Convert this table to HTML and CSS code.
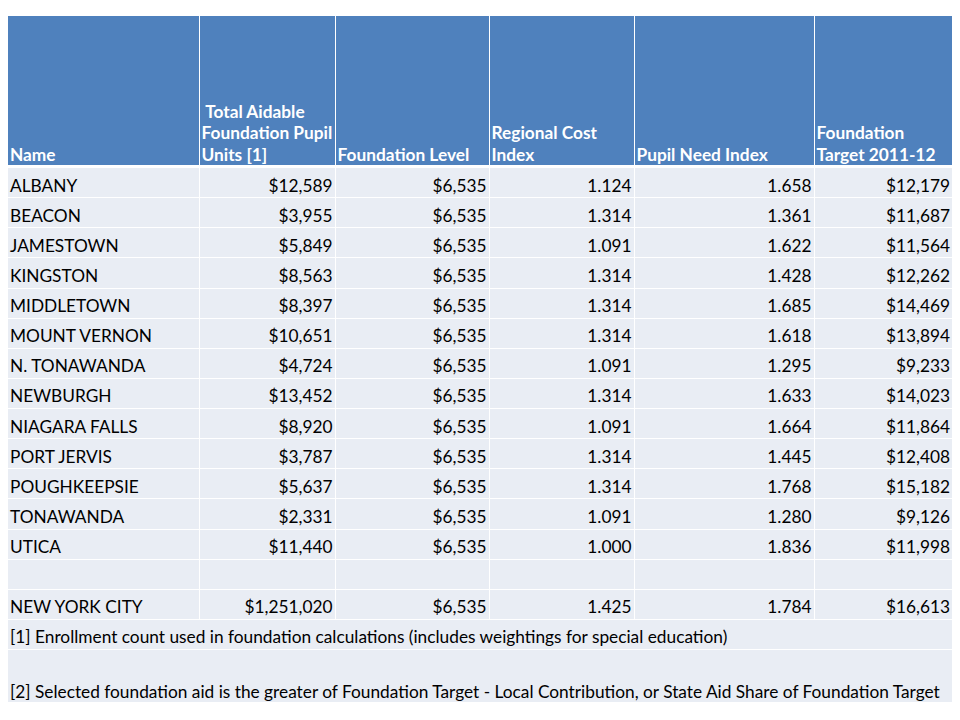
FILE: index.html
```html
<!DOCTYPE html>
<html>
<head>
<meta charset="utf-8">
<link rel="stylesheet" href="styles.css">
</head>
<body>
<table class="aid-table">
  <colgroup>
    <col class="c1"><col class="c2"><col class="c3"><col class="c4"><col class="c5"><col class="c6">
  </colgroup>
  <thead>
    <tr>
      <th>Name</th>
      <th>&nbsp;Total Aidable Foundation Pupil Units [1]</th>
      <th>Foundation Level</th>
      <th>Regional Cost Index</th>
      <th>Pupil Need Index</th>
      <th>Foundation Target 2011-12</th>
    </tr>
  </thead>
  <tbody>
    <tr><td>ALBANY</td><td class="num">$12,589</td><td class="num">$6,535</td><td class="num">1.124</td><td class="num">1.658</td><td class="num">$12,179</td></tr>
    <tr><td>BEACON</td><td class="num">$3,955</td><td class="num">$6,535</td><td class="num">1.314</td><td class="num">1.361</td><td class="num">$11,687</td></tr>
    <tr><td>JAMESTOWN</td><td class="num">$5,849</td><td class="num">$6,535</td><td class="num">1.091</td><td class="num">1.622</td><td class="num">$11,564</td></tr>
    <tr><td>KINGSTON</td><td class="num">$8,563</td><td class="num">$6,535</td><td class="num">1.314</td><td class="num">1.428</td><td class="num">$12,262</td></tr>
    <tr><td>MIDDLETOWN</td><td class="num">$8,397</td><td class="num">$6,535</td><td class="num">1.314</td><td class="num">1.685</td><td class="num">$14,469</td></tr>
    <tr><td>MOUNT VERNON</td><td class="num">$10,651</td><td class="num">$6,535</td><td class="num">1.314</td><td class="num">1.618</td><td class="num">$13,894</td></tr>
    <tr><td>N. TONAWANDA</td><td class="num">$4,724</td><td class="num">$6,535</td><td class="num">1.091</td><td class="num">1.295</td><td class="num">$9,233</td></tr>
    <tr><td>NEWBURGH</td><td class="num">$13,452</td><td class="num">$6,535</td><td class="num">1.314</td><td class="num">1.633</td><td class="num">$14,023</td></tr>
    <tr><td>NIAGARA FALLS</td><td class="num">$8,920</td><td class="num">$6,535</td><td class="num">1.091</td><td class="num">1.664</td><td class="num">$11,864</td></tr>
    <tr><td>PORT JERVIS</td><td class="num">$3,787</td><td class="num">$6,535</td><td class="num">1.314</td><td class="num">1.445</td><td class="num">$12,408</td></tr>
    <tr><td>POUGHKEEPSIE</td><td class="num">$5,637</td><td class="num">$6,535</td><td class="num">1.314</td><td class="num">1.768</td><td class="num">$15,182</td></tr>
    <tr><td>TONAWANDA</td><td class="num">$2,331</td><td class="num">$6,535</td><td class="num">1.091</td><td class="num">1.280</td><td class="num">$9,126</td></tr>
    <tr><td>UTICA</td><td class="num">$11,440</td><td class="num">$6,535</td><td class="num">1.000</td><td class="num">1.836</td><td class="num">$11,998</td></tr>
    <tr><td></td><td></td><td></td><td></td><td></td><td></td></tr>
    <tr><td>NEW YORK CITY</td><td class="num">$1,251,020</td><td class="num">$6,535</td><td class="num">1.425</td><td class="num">1.784</td><td class="num">$16,613</td></tr>
    <tr><td colspan="6" class="note">[1] Enrollment count used in foundation calculations (includes weightings for special education)</td></tr>
    <tr><td colspan="6" class="note note-tall">[2] Selected foundation aid is the greater of Foundation Target - Local Contribution, or State Aid Share of Foundation Target</td></tr>
  </tbody>
</table>
</body>
</html>
```
FILE: styles.css
```css
html, body {
  margin: 0;
  padding: 0;
  background: #ffffff;
}
body {
  padding: 16px 8px 0 8px;
  font-family: Lato, "Open Sans", sans-serif;
}
.aid-table {
  border-collapse: collapse;
  table-layout: fixed;
  width: 944px;
  font-size: 17.3px;
  color: #000;
}
.c1 { width: 191px; }
.c2 { width: 136px; }
.c3 { width: 154px; }
.c4 { width: 145px; }
.c5 { width: 180px; }
.c6 { width: 138px; }

.aid-table th {
  background: #4f81bd;
  color: #ffffff;
  font-weight: bold;
  font-size: 17.3px;
  text-align: left;
  vertical-align: bottom;
  height: 149px;
  padding: 0 1px 0 2px;
  line-height: 21.5px;
  border: 1px solid #ffffff;
  border-bottom: 3px solid #ffffff;
  border-top: none;
}
.aid-table td {
  background: #e9edf4;
  height: 23.13px;
  padding: 6px 2px 0 2px;
  line-height: 20px;
  vertical-align: middle;
  border: 1px solid #ffffff;
  white-space: nowrap;
}
.aid-table td.num {
  text-align: right;
}
.aid-table td.note {
  height: 23px;
}
.aid-table td.note-tall {
  height: 52px;
  padding: 0 2px 0 2px;
  vertical-align: bottom;
}
.aid-table tr:last-child td {
  border-bottom: none;
}
.aid-table tr td:first-child, .aid-table tr th:first-child {
  border-left: none;
}
.aid-table tr td:last-child, .aid-table tr th:last-child {
  border-right: none;
}
```
